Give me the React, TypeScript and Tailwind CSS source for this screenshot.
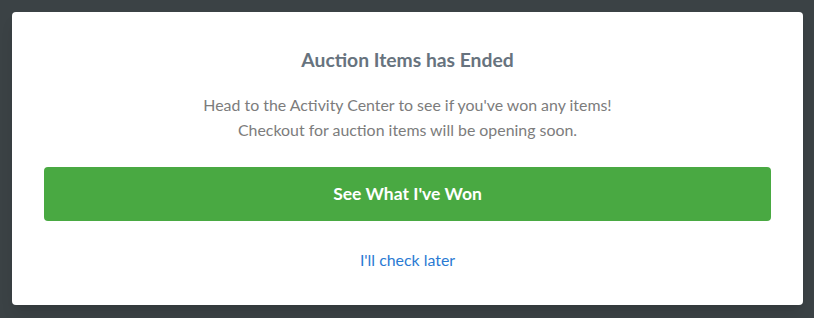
import React from 'react';

const App = () => {
  return (
    <div className="w-[814px] h-[318px] bg-[#3b4245] p-3 font-['Lato','Liberation_Sans',sans-serif]">
      <div className="w-[791px] h-[293px] bg-white rounded-[4px] shadow-lg px-8 pt-9 flex flex-col items-center">
        <h2 className="text-[19.3px] leading-6 font-bold text-[#67737e]">Auction Items has Ended</h2>
        <p className="mt-5 text-[15.9px] leading-[25px] text-[#7c7c7c] text-center">
          Head to the Activity Center to see if you've won any items!
          <br />
          Checkout for auction items will be opening soon.
        </p>
        <button className="mt-[25px] w-full h-[54px] rounded-[4px] bg-[#49a942] text-white text-[17.5px] font-bold">
          See What I've Won
        </button>
        <button className="mt-[29px] text-[15.9px] leading-5 text-[#2a7ad3]">I'll check later</button>
      </div>
    </div>
  );
};

export default App;
